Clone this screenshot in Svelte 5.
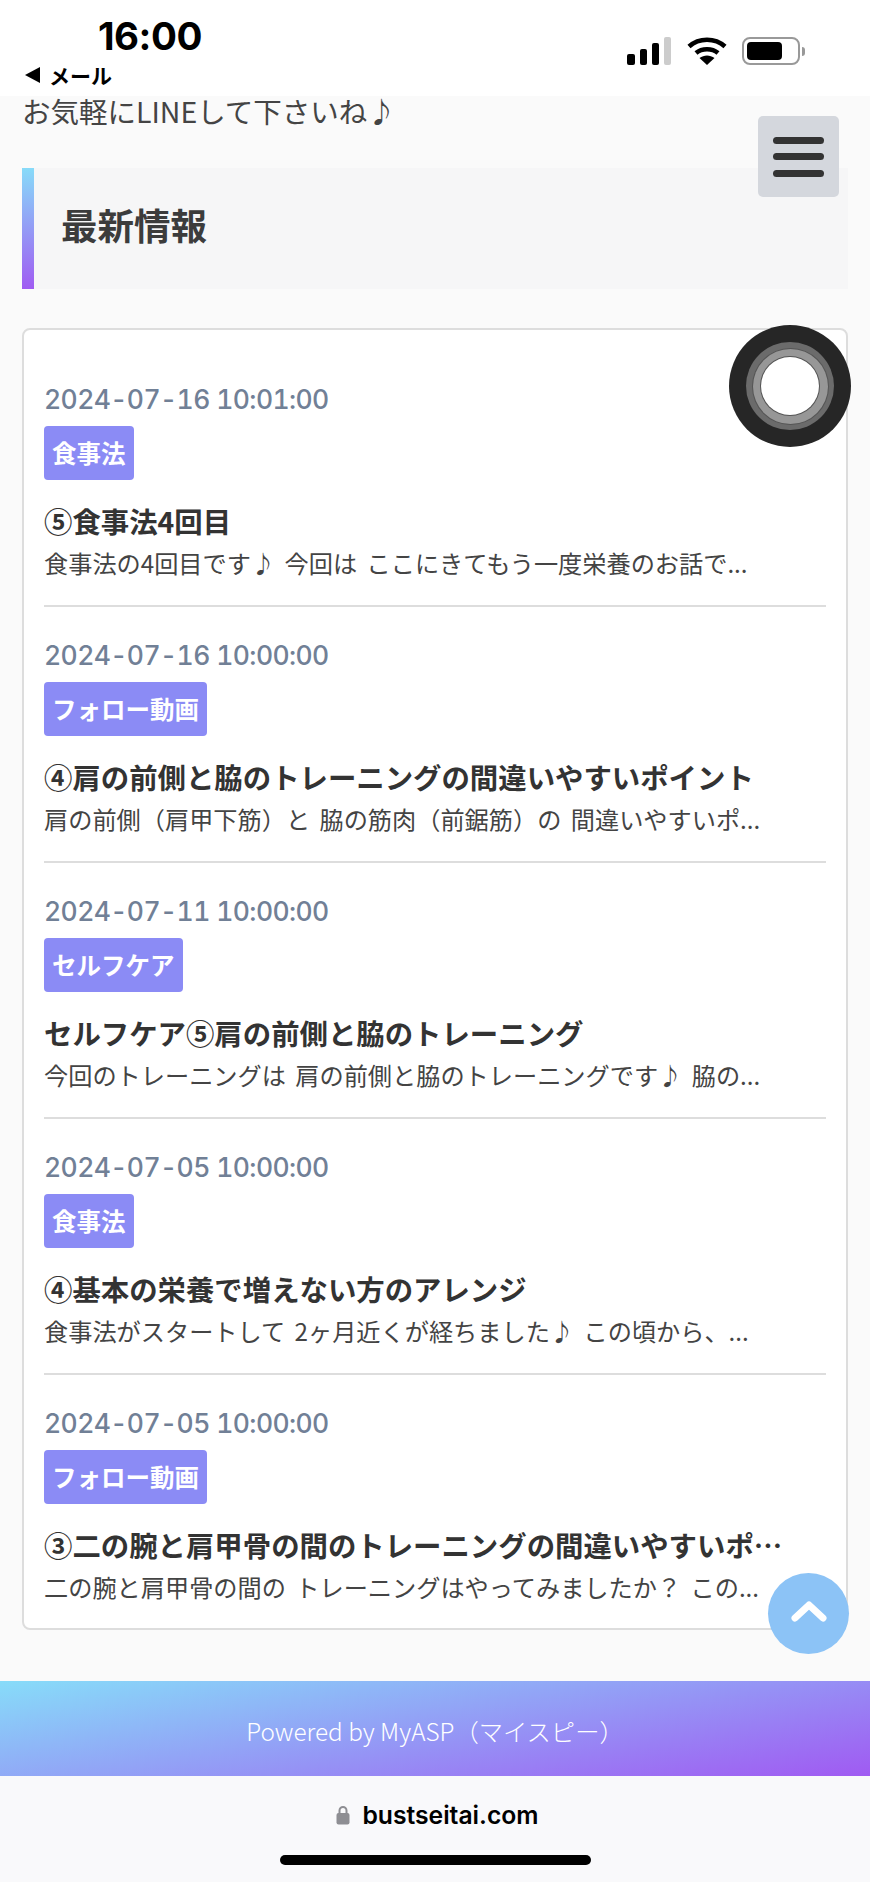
<script>
  const items = [
    { date: '2024-07-16 10:01:00', tag: '食事法', title: '⑤食事法4回目', desc: '食事法の4回目です♪ 今回は ここにきてもう一度栄養のお話で...' },
    { date: '2024-07-16 10:00:00', tag: 'フォロー動画', title: '④肩の前側と脇のトレーニングの間違いやすいポイント', desc: '肩の前側（肩甲下筋）と 脇の筋肉（前鋸筋）の 間違いやすいポ...' },
    { date: '2024-07-11 10:00:00', tag: 'セルフケア', title: 'セルフケア⑤肩の前側と脇のトレーニング', desc: '今回のトレーニングは 肩の前側と脇のトレーニングです♪ 脇の...' },
    { date: '2024-07-05 10:00:00', tag: '食事法', title: '④基本の栄養で増えない方のアレンジ', desc: '食事法がスタートして 2ヶ月近くが経ちました♪ この頃から、...' },
    { date: '2024-07-05 10:00:00', tag: 'フォロー動画', title: '③二の腕と肩甲骨の間のトレーニングの間違いやすいポ…', desc: '二の腕と肩甲骨の間の トレーニングはやってみましたか？ この...' }
  ];
</script>

<div class="page">
  <header class="status">
    <div class="status-left">
      <div class="time">16:00</div>
      <div class="back"><span class="tri"></span>メール</div>
    </div>
    <div class="status-right">
      <svg width="46" height="28" viewBox="0 0 46 28">
        <rect x="0" y="17" width="8" height="11" rx="2" fill="#000" />
        <rect x="13" y="12" width="7" height="16" rx="2" fill="#000" />
        <rect x="25" y="6" width="7" height="22" rx="2" fill="#000" />
        <rect x="37" y="0" width="7" height="28" rx="2" fill="#ccc" />
      </svg>
      <svg width="40" height="28" viewBox="0 0 40 28">
        <path d="M2 9.5 C12 0.5 28 0.5 38 9.5" fill="none" stroke="#000" stroke-width="4.6" stroke-linecap="butt" />
        <path d="M9 16 C15 11 25 11 31 16" fill="none" stroke="#000" stroke-width="4.6" />
        <path d="M12.5 21 L20 28 L27.5 21 C23 17.5 17 17.5 12.5 21 Z" fill="#000" />
      </svg>
      <div class="battery"><div class="level"></div></div>
      <div class="nub"></div>
    </div>
  </header>

  <main class="content">
    <p class="intro">お気軽にLINEして下さいね♪</p>
    <h2 class="heading">最新情報</h2>

    <section class="card">
      {#each items as item, i}
        <article class="item" class:last={i === items.length - 1}>
          <div class="date">{item.date}</div>
          <span class="tag">{item.tag}</span>
          <h3 class="title">{item.title}</h3>
          <p class="desc">{item.desc}</p>
        </article>
      {/each}
    </section>
  </main>

  <footer class="footer">Powered by MyASP（マイスピー）</footer>

  <div class="safari">
    <div class="url">
      <svg width="14" height="20" viewBox="0 0 14 20">
        <path d="M3.5 9 V5.5 a3.5 3.5 0 0 1 7 0 V9" fill="none" stroke="#8e8e93" stroke-width="2" />
        <rect x="0.5" y="8" width="13" height="11.5" rx="2" fill="#8e8e93" />
      </svg>
      <span>bustseitai.com</span>
    </div>
    <div class="home"></div>
  </div>

  <button class="menu" aria-label="menu"><span></span><span></span><span></span></button>
  <div class="assistive"><div class="ring1"><div class="ring2"><div class="ring3"></div></div></div></div>
  <button class="totop" aria-label="top">
    <svg width="36" height="22" viewBox="0 0 36 22">
      <path d="M4 18 L18 5 L32 18" fill="none" stroke="#fff" stroke-width="7" stroke-linecap="round" stroke-linejoin="round" />
    </svg>
  </button>
</div>

<style>
  :global(body) {
    margin: 0;
    background: #fafafa;
  }

  .page {
    position: relative;
    width: 870px;
    height: 1882px;
    overflow: hidden;
    font-family: "Noto Sans CJK JP", "Noto Sans", sans-serif;
    color: #333;
    background: #fafafa;
  }

  .status {
    height: 96px;
    background: #fff;
    display: flex;
    justify-content: space-between;
    box-sizing: border-box;
    padding: 0 65px 0 25px;
  }

  .status-left {
    display: flex;
    flex-direction: column;
  }

  .time {
    font-family: Inter, sans-serif;
    font-weight: 700;
    font-size: 38.5px;
    line-height: 44px;
    margin: 14px 0 0 73px;
    letter-spacing: -0.5px;
    color: #000;
  }

  .back {
    display: flex;
    align-items: center;
    font-size: 21px;
    font-weight: 700;
    line-height: 24px;
    color: #000;
    margin-top: 5px;
  }

  .tri {
    width: 0;
    height: 0;
    border-style: solid;
    border-width: 8px 15px 8px 0;
    border-color: transparent #000 transparent transparent;
    margin-right: 9px;
  }

  .status-right {
    display: flex;
    align-items: center;
    height: 28px;
    margin-top: 37px;
  }

  .status-right svg:nth-child(2) {
    margin-left: 14px;
  }

  .battery {
    width: 58px;
    height: 28px;
    box-sizing: border-box;
    border: 2px solid #999;
    border-radius: 8px;
    padding: 3px;
    margin-left: 15px;
  }

  .level {
    width: 35px;
    height: 18px;
    background: #000;
    border-radius: 4px;
  }

  .nub {
    width: 3px;
    height: 9px;
    background: #999;
    border-radius: 0 3px 3px 0;
    margin-left: 2px;
  }

  .content {
    padding: 0 22px;
    height: 1585px;
  }

  .intro {
    margin: 0;
    font-size: 28.5px;
    line-height: 30px;
    height: 72px;
    color: #444;
  }

  .heading {
    margin: 0;
    height: 121px;
    box-sizing: border-box;
    border-left: 12px solid;
    border-image: linear-gradient(180deg, #87dcf9, #a05af2) 1;
    background: #f6f6f7;
    padding: 0 0 8px 27px;
    display: flex;
    align-items: center;
    font-size: 36.5px;
    font-weight: 700;
    color: #3c3c3c;
  }

  .card {
    margin-top: 39px;
    height: 1302px;
    box-sizing: border-box;
    background: #fff;
    border: 2px solid #ddd;
    border-radius: 8px;
    padding: 21px 20px 0;
  }

  .item {
    height: 256px;
    box-sizing: border-box;
    padding-top: 31px;
    border-bottom: 2px solid #ddd;
  }

  .item.last {
    height: auto;
    border-bottom: none;
  }

  .date {
    font-family: Inter, sans-serif;
    font-size: 26.5px;
    line-height: 34px;
    letter-spacing: -0.6px;
    font-variant-numeric: tabular-nums;
    font-weight: 500;
    color: #718096;
  }

  .tag {
    display: inline-block;
    background: #8b8bf5;
    color: #fff;
    font-size: 24.5px;
    font-weight: 700;
    line-height: 54px;
    padding: 0 8px;
    border-radius: 4px;
    margin-top: 10px;
    vertical-align: top;
  }

  .title {
    margin: 21px 0 0;
    font-size: 28.4px;
    line-height: 40px;
    font-weight: 700;
    color: #333;
    white-space: nowrap;
  }

  .desc {
    margin: 4px 0 0;
    font-size: 24.2px;
    line-height: 36px;
    word-spacing: 4px;
    color: #444;
    white-space: nowrap;
  }

  .footer {
    height: 95px;
    box-sizing: border-box;
    padding-top: 3px;
    background: linear-gradient(170deg, #87dcf9, #a05af2);
    color: #fff;
    font-size: 24.3px;
    font-weight: 300;
    display: flex;
    align-items: center;
    justify-content: center;
  }

  .safari {
    height: 106px;
    background: #f9f9fb;
    display: flex;
    flex-direction: column;
    align-items: center;
  }

  .url {
    display: flex;
    align-items: center;
    gap: 12px;
    margin: 23px 0 0 5px;
    height: 32px;
    font-family: Inter, sans-serif;
    font-size: 24.7px;
    font-weight: 600;
    color: #000;
  }

  .home {
    width: 311px;
    height: 10px;
    border-radius: 5px;
    background: #000;
    margin-top: 24px;
  }

  .menu {
    position: absolute;
    left: 758px;
    top: 116px;
    width: 81px;
    height: 81px;
    padding: 0;
    border: none;
    border-radius: 5px;
    background: #d4d7dd;
    display: flex;
    flex-direction: column;
    align-items: center;
    justify-content: center;
    gap: 9.5px;
  }

  .menu span {
    width: 51px;
    height: 7px;
    border-radius: 3.5px;
    background: #333;
  }

  .assistive {
    position: absolute;
    left: 729px;
    top: 325px;
    width: 122px;
    height: 122px;
    border-radius: 50%;
    background: #262626;
    display: flex;
    align-items: center;
    justify-content: center;
  }

  .ring1 {
    width: 88px;
    height: 88px;
    border-radius: 50%;
    background: #6b6b6b;
    display: flex;
    align-items: center;
    justify-content: center;
  }

  .ring2 {
    width: 75px;
    height: 75px;
    border-radius: 50%;
    background: #979797;
    box-shadow: 0 0 0 1px #555;
    display: flex;
    align-items: center;
    justify-content: center;
  }

  .ring3 {
    width: 58px;
    height: 58px;
    border-radius: 50%;
    background: #fff;
    box-shadow: 0 0 0 1px #555;
  }

  .totop {
    position: absolute;
    left: 768px;
    top: 1573px;
    width: 81px;
    height: 81px;
    border: none;
    padding: 0 0 6px;
    border-radius: 50%;
    background: #8cc3f6;
    display: flex;
    align-items: center;
    justify-content: center;
  }
</style>
